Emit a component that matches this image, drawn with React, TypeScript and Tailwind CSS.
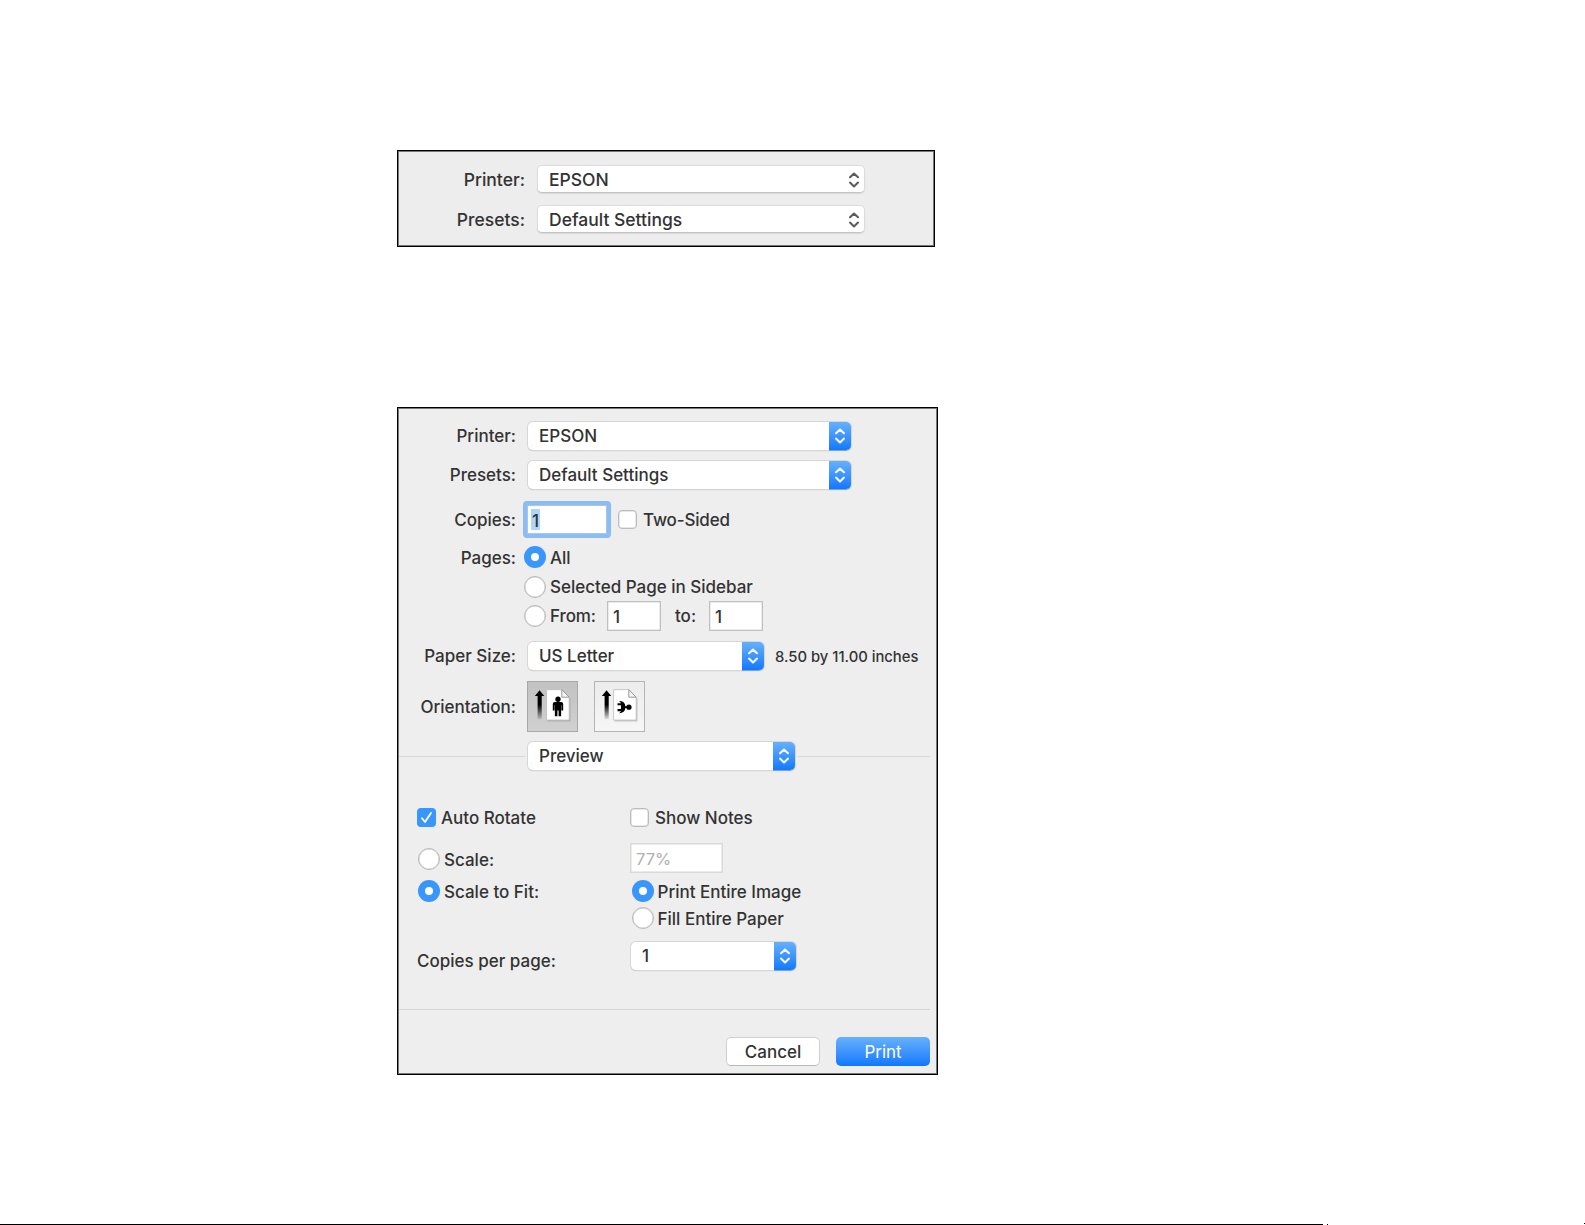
import type { ReactNode } from "react";

function Chevrons({ className }: { className: string }) {
  return (
    <svg viewBox="0 0 12 18" className={`h-[18px] w-3 ${className}`} fill="none" stroke="currentColor" strokeWidth="2.1" strokeLinecap="round" strokeLinejoin="round">
      <path d="M2 6.2 6 2.6l4 3.6M2 11.6l4 3.8 4-3.8" />
    </svg>
  );
}

function Label({ children, className = "" }: { children: ReactNode; className?: string }) {
  return <div className={`w-[118px] shrink-0 text-right ${className}`}>{children}</div>;
}

function Select({ value, className }: { value: string; className: string }) {
  return (
    <div className={`flex h-7 shrink-0 rounded-[5px] bg-white shadow-[0_0_0_1px_#d6d6d6,0_1px_1px_0_#aaa] ${className}`}>
      <div className="flex flex-1 items-center pl-[11px]">{value}</div>
      <div className="flex w-[22px] items-center justify-center rounded-r-[5px] bg-linear-to-b from-[#64b0fb] to-[#0f78fd] shadow-[0_0.5px_0_0_#1b76ea]">
        <Chevrons className="text-[#f2f8ff]" />
      </div>
    </div>
  );
}

function PlainSelect({ value }: { value: string }) {
  return (
    <div className="flex h-7 w-[328px] items-center justify-between rounded-[5px] border border-[#dcdcdc] border-b-[#c4c4c4] bg-white pr-1 pl-[11px] shadow-[0_1px_1px_0_#d8d8d8]">
      <span className="pt-px">{value}</span>
      <Chevrons className="mt-px text-[#5c5c5c]" />
    </div>
  );
}

function Radio({ checked = false }: { checked?: boolean }) {
  return checked ? (
    <div className="flex size-[22px] shrink-0 items-center justify-center rounded-full bg-[#3896fc]">
      <div className="size-2 rounded-full bg-white" />
    </div>
  ) : (
    <div className="size-[22px] shrink-0 rounded-full border border-[#b8b8b8] bg-white shadow-[inset_0_0_0_0.5px_#ccc]" />
  );
}

function Checkbox({ checked = false }: { checked?: boolean }) {
  return checked ? (
    <div className="flex size-[19px] shrink-0 items-center justify-center rounded-[4px] bg-[#3896fc]">
      <svg viewBox="0 0 19 19" className="size-[19px]" fill="none" stroke="white" strokeWidth="1.8" strokeLinecap="round" strokeLinejoin="round">
        <path d="M5 10.3 8 14l6-9" />
      </svg>
    </div>
  ) : (
    <div className="size-[19px] shrink-0 rounded-[4px] border border-[#bcbcbc] bg-white shadow-[inset_0_0_0_0.5px_#d0d0d0]" />
  );
}

function Field({ value, className }: { value: string; className: string }) {
  return <div className={`flex shrink-0 items-center border bg-white shadow-[inset_0_0_0_0.5px_#d8d8d8] ${className}`}>{value}</div>;
}

function OrientationIcon({ landscape = false }: { landscape?: boolean }) {
  const id = landscape ? "arrow-l" : "arrow-p";
  return (
    <svg viewBox="1 1 50 50" className="size-full">
      <defs>
        <linearGradient id={id} x1="0" y1="0" x2="0" y2="1">
          <stop offset="0.5" stopColor="#000" />
          <stop offset="1" stopColor="#000" stopOpacity="0.08" />
        </linearGradient>
      </defs>
      <path d="M12.8 9.3 17.6 15.4H15V39H10.8V15.4H8Z" fill={`url(#${id})`} />
      <path d="M21 10H36.5L44.4 17.5V41.4H21Z" fill="#888" opacity="0.4" />
      <path d="M20 8.8H35.5L43 16.5V39.8H20Z" fill="#fff" stroke="#bbb" strokeWidth="0.8" />
      <path d="M35.5 8.8V16.5H43Z" fill="#f4f4f4" stroke="#999" strokeWidth="1" />
      {landscape ? (
        <g>
          <circle cx="35.6" cy="26.7" r="2.7" />
          <path d="M24 22.6 27.6 22.6 25.6 20.5 Q31.6 20.6 32 25.8H34V27.6H32Q31.6 32.8 25.6 32.9L27.6 30.8H24V28.6H27.5V24.8H24Z" />
        </g>
      ) : (
        <g>
          <circle cx="31.6" cy="18.6" r="2.7" />
          <path d="M28.4 21.4h6.4q2.1 0 2.1 2v6.6h-1.8v-5.4h-.3V36h-2.6v-6h-1.2v6h-2.6V24.6h-.3V30h-1.8v-6.6q0-2 2.1-2Z" />
        </g>
      )}
    </svg>
  );
}

export default function App() {
  return (
    <div className="flex h-[1225px] w-[1585px] flex-col overflow-hidden bg-white pt-[150px] font-['Inter',sans-serif] text-[17px] leading-5 font-medium text-[#333]">
      <section className="ml-[397px] h-[97px] w-[538px] border border-black bg-[#ededed] pt-[14px] text-[17.5px] shadow-[inset_0_0_0_1px_#777]">
        <div className="flex items-center gap-3">
          <div className="w-[127px] pt-px text-right">Printer:</div>
          <PlainSelect value="EPSON" />
        </div>
        <div className="mt-3 flex items-center gap-3">
          <div className="w-[127px] pt-px text-right">Presets:</div>
          <PlainSelect value="Default Settings" />
        </div>
      </section>

      <section className="mt-[160px] ml-[397px] h-[668px] w-[541px] border border-black bg-[#eee] pt-[14px] shadow-[inset_0_0_0_1px_#777]">
        <div className="flex items-center">
          <Label>Printer:</Label>
          <Select value="EPSON" className="ml-3 w-[323px]" />
        </div>
        <div className="mt-[11px] flex items-center">
          <Label>Presets:</Label>
          <Select value="Default Settings" className="ml-3 w-[323px]" />
        </div>
        <div className="mt-3 flex h-[37px] items-center">
          <Label>Copies:</Label>
          <div className="ml-[7px] flex h-[37px] w-[88px] items-center rounded-[4px] border-[4.5px] border-[#8cbcf4] bg-white pl-1 shadow-[inset_0_0_0_1px_#a9c6e6]">
            <span className="h-[21px] w-[9px] bg-[#b0d5fc] pt-[2px] text-center leading-[21px]">1</span>
          </div>
          <div className="ml-[7px] flex items-center gap-[6px]">
            <Checkbox />
            <span className="tracking-[-0.15px]">Two-Sided</span>
          </div>
        </div>
        <div className="mt-2 flex h-[22px] items-center">
          <Label className="pt-px">Pages:</Label>
          <div className="ml-2 flex items-center gap-1">
            <Radio checked />
            <span className="pt-px">All</span>
          </div>
        </div>
        <div className="mt-2 ml-[126px] flex h-[22px] items-center gap-1">
          <Radio />
          <span>Selected Page in Sidebar</span>
        </div>
        <div className="mt-[2px] ml-[126px] flex h-[31px] items-center">
          <Radio />
          <span className="ml-1 w-[57px] pt-px tracking-[-0.1px]">From:</span>
          <Field value="1" className="h-[30px] w-[54px] border-[#c0c0c0] pt-[3px] pl-[5px]" />
          <span className="ml-[14px] w-[34px] pt-px">to:</span>
          <Field value="1" className="h-[30px] w-[54px] border-[#c0c0c0] pt-[3px] pl-[5px]" />
        </div>
        <div className="mt-[11px] flex items-center">
          <Label>Paper Size:</Label>
          <Select value="US Letter" className="ml-3 w-[236px]" />
          <span className="ml-[11px] pt-px text-[14.8px]">8.50 by 11.00 inches</span>
        </div>
        <div className="mt-[10px] flex h-[52px] items-center">
          <Label className="pt-px">Orientation:</Label>
          <div className="ml-[11px] size-[51px] border border-[#a8a8a8] bg-linear-to-b from-[#c2c2c2] to-[#d0d0d0]">
            <OrientationIcon />
          </div>
          <div className="ml-4 size-[51px] border border-[#b4b4b4] bg-linear-to-b from-[#ececec] to-[#f6f6f6]">
            <OrientationIcon landscape />
          </div>
        </div>
        <div className="mt-[10px] flex items-center">
          <div className="mt-px mr-[3px] ml-px h-[1.5px] w-[126px] bg-[#d8d8d8]" />
          <Select value="Preview" className="w-[267px]" />
          <div className="mt-px ml-[3px] h-[1.5px] w-[132px] bg-[#d8d8d8]" />
        </div>

        <div className="mt-[38px] ml-[19px] flex h-[19px] items-center">
          <div className="flex w-[213px] items-center gap-[5px]">
            <Checkbox checked />
            <span>Auto Rotate</span>
          </div>
          <div className="flex items-center gap-[6px]">
            <Checkbox />
            <span>Show Notes</span>
          </div>
        </div>
        <div className="mt-[15px] ml-[20px] flex h-[30px] items-center">
          <div className="mt-1 flex w-[212px] items-center gap-[4px]">
            <Radio />
            <span className="pt-px">Scale:</span>
          </div>
          <Field value="77%" className="mt-px h-[30px] w-[93px] border-[#dadada] pt-[3px] pl-[5px] text-[16.5px] font-normal text-[#b0b0b0]" />
        </div>
        <div className="mt-2 ml-[20px] flex h-[22px] items-center">
          <div className="flex w-[213.5px] items-center gap-[4px]">
            <Radio checked />
            <span className="pt-px">Scale to Fit:</span>
          </div>
          <div className="flex items-center gap-1">
            <Radio checked />
            <span className="pt-px">Print Entire Image</span>
          </div>
        </div>
        <div className="mt-[5px] ml-[233.5px] flex h-[22px] items-center gap-1">
          <Radio />
          <span className="pt-px">Fill Entire Paper</span>
        </div>
        <div className="mt-[13px] ml-[19px] flex h-7 items-center">
          <span className="mt-[9px] w-[214px]">Copies per page:</span>
          <Select value="1" className="w-[165px]" />
        </div>
        <div className="mt-[39px] mr-[7px] ml-px h-px bg-[#d4d4d4]" />
        <div className="mt-[27px] mr-[7px] flex justify-end gap-4">
          <div className="flex h-[29px] w-[94px] items-center justify-center rounded-[5px] border border-[#d0d0d0] border-b-[#b8b8b8] bg-white">Cancel</div>
          <div className="flex h-[29px] w-[94px] items-center justify-center rounded-[5px] bg-linear-to-b from-[#66b1fb] to-[#0a77fd] font-normal text-white">Print</div>
        </div>
      </section>

      <footer className="mt-auto flex h-[2px] w-full items-end">
        <div className="h-px w-[1323px] bg-black" />
        <div className="ml-1 size-px bg-black" />
        <div className="mb-px ml-auto size-px bg-black" />
      </footer>
    </div>
  );
}
